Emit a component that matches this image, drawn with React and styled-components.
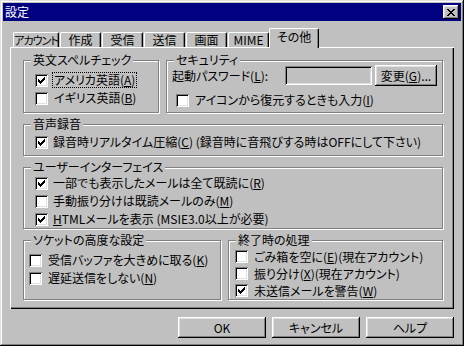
import React from 'react';
import styled, { createGlobalStyle } from 'styled-components';

const GlobalStyle = createGlobalStyle`
  html, body {
    margin: 0;
    padding: 0;
    background: #c0c0c0;
  }
  body {
    font-family: "Noto Sans CJK JP", "Noto Sans", sans-serif;
    font-size: 12px;
    font-feature-settings: "palt";
    color: #000;
  }
  * {
    box-sizing: border-box;
  }
`;

const Window = styled.div`
  width: 464px;
  height: 346px;
  padding: 3px;
  background: #c0c0c0;
  box-shadow: inset -1px -1px 0 #000, inset 1px 1px 0 #dfdfdf,
    inset -2px -2px 0 #808080, inset 2px 2px 0 #fff;
  display: flex;
  flex-direction: column;
`;

const TitleBar = styled.div`
  height: 18px;
  background: #000080;
  color: #fff;
  display: flex;
  align-items: center;
  justify-content: space-between;
  padding: 0 2px;
  line-height: 18px;
`;

const Raised = `
  background: #c0c0c0;
  box-shadow: inset -1px -1px 0 #000, inset 1px 1px 0 #fff,
    inset -2px -2px 0 #808080, inset 2px 2px 0 #dfdfdf;
`;

const CloseButton = styled.div`
  ${Raised}
  width: 16px;
  height: 14px;
  display: flex;
  align-items: center;
  justify-content: center;
`;

const TabStrip = styled.div`
  display: flex;
  align-items: flex-end;
  height: 19px;
  margin-top: 7px;
  padding-left: 10px;
  position: relative;
  z-index: 1;
`;

const Tab = styled.div`
  flex: none;
  width: ${(p) => p.$w}px;
  height: ${(p) => (p.$active ? 20 : 15)}px;
  margin-right: 1px;
  margin-left: ${(p) => (p.$active ? -1 : 0)}px;
  margin-bottom: ${(p) => (p.$active ? -1 : 0)}px;
  background: #c0c0c0;
  border-left: 1px solid #fff;
  border-top: 1px solid #fff;
  border-right: 1px solid #000;
  border-radius: 2px 2px 0 0;
  box-shadow: inset -1px 0 0 #808080;
  display: flex;
  justify-content: center;
  align-items: ${(p) => (p.$active ? 'flex-start' : 'center')};
  padding-top: ${(p) => (p.$active ? 1 : 0)}px;
  line-height: 14px;
  font-size: ${(p) => (p.$tight ? 11 : 12)}px;
  letter-spacing: ${(p) => (p.$tight ? -1 : 0)}px;
  white-space: nowrap;
`;

const Panel = styled.div`
  margin-left: 7px;
  width: 444px;
  height: 262px;
  padding: 13px 11px 0 13px;
  box-shadow: inset 1px 1px 0 #fff, inset -1px -1px 0 #000,
    inset -2px -2px 0 #808080;
  display: flex;
  flex-direction: column;
  gap: 11px;
`;

const GroupRow = styled.div`
  display: grid;
  grid-template-columns: ${(p) => p.$cols};
  gap: 7px;
`;

const Group = styled.div`
  position: relative;
  height: ${(p) => p.$h}px;
  border: 1px solid #808080;
  box-shadow: inset 1px 1px 0 #fff, 1px 1px 0 #fff;
  padding: ${(p) => p.$pad};
  display: flex;
  flex-direction: column;
`;

const Legend = styled.span`
  position: absolute;
  top: -8px;
  left: 7px;
  padding: 0 2px;
  background: #c0c0c0;
  line-height: 14px;
  white-space: nowrap;
`;

const Row = styled.div`
  display: flex;
  align-items: center;
  height: ${(p) => p.$h || 18}px;
  gap: ${(p) => p.$gap || 6}px;
  margin-top: ${(p) => p.$mt || 0}px;
  padding-left: ${(p) => p.$pl || 0}px;
  line-height: 14px;
  white-space: nowrap;
`;

const Box = styled.span`
  flex: none;
  width: 13px;
  height: 13px;
  background: #fff;
  box-shadow: inset 1px 1px 0 #808080, inset -1px -1px 0 #fff,
    inset 2px 2px 0 #000, inset -2px -2px 0 #dfdfdf;
  display: flex;
  align-items: center;
  justify-content: center;
`;

const Label = styled.span`
  padding: 0 1px;
  margin-left: -1px;
  outline: ${(p) => (p.$focus ? '1px dotted #000' : 'none')};
`;

const Field = styled.div`
  width: 87px;
  height: 19px;
  margin-left: auto;
  background: #c0c0c0;
  box-shadow: inset 1px 1px 0 #808080, inset -1px -1px 0 #fff,
    inset 2px 2px 0 #000, inset -2px -2px 0 #dfdfdf;
`;

const Button = styled.div`
  ${Raised}
  width: ${(p) => p.$w}px;
  height: 21px;
  display: flex;
  align-items: center;
  justify-content: center;
  line-height: 14px;
  white-space: nowrap;
`;

const Footer = styled.div`
  display: flex;
  justify-content: flex-end;
  gap: 6px;
  margin-top: 8px;
  padding-right: 7px;
`;

const CHECK = [[6, 0, 1], [5, 1, 2], [0, 2, 1], [4, 2, 3], [0, 3, 2], [3, 3, 3], [0, 4, 5], [1, 5, 3], [2, 6, 1]];
const CROSS = [[0, 0, 2], [6, 0, 2], [1, 1, 2], [5, 1, 2], [2, 2, 4], [3, 3, 2], [2, 4, 4], [1, 5, 2], [5, 5, 2], [0, 6, 2], [6, 6, 2]];

const Pixels = ({ rows, w, h }) => (
  <svg width={w} height={h} viewBox={`0 0 ${w} ${h}`} shapeRendering="crispEdges">
    {rows.map(([x, y, len], i) => (
      <rect key={i} x={x} y={y} width={len} height={1} fill="#000" />
    ))}
  </svg>
);

const Check = ({ checked, children, focus, ...rest }) => (
  <Row {...rest}>
    <Box>{checked && <Pixels rows={CHECK} w={7} h={7} />}</Box>
    <Label $focus={focus}>{children}</Label>
  </Row>
);

const tabs = [
  ['アカウント', 46, true],
  ['作成', 41],
  ['受信', 41],
  ['送信', 41],
  ['画面', 41],
  ['MIME', 41],
];

export default function App() {
  return (
    <>
      <GlobalStyle />
      <Window>
        <TitleBar>
          <span>設定</span>
          <CloseButton>
            <Pixels rows={CROSS} w={8} h={7} />
          </CloseButton>
        </TitleBar>

        <TabStrip>
          {tabs.map(([t, w, tight]) => (
            <Tab key={t} $w={w} $tight={tight}>{t}</Tab>
          ))}
          <Tab $w={50} $active>その他</Tab>
        </TabStrip>

        <Panel>
          <GroupRow $cols="136px 277px">
            <Group $h={53} $pad="10px 0 0 11px">
              <Legend>英文スペルチェック</Legend>
              <Check checked focus>アメリカ英語(<u>A</u>)</Check>
              <Check>イギリス英語(<u>B</u>)</Check>
            </Group>
            <Group $h={53} $pad="4px 5px 0 5px">
              <Legend>セキュリティ</Legend>
              <Row $h={21} $gap={3}>
                <span>起動パスワード(<u>L</u>):</span>
                <Field />
                <Button $w={62}>変更(<u>G</u>)...</Button>
              </Row>
              <Check $mt={5} $pl={4}>アイコンから復元するときも入力(<u>I</u>)</Check>
            </Group>
          </GroupRow>

          <Group $h={32} $pad="8px 0 0 11px">
            <Legend>音声録音</Legend>
            <Check checked $gap={5}>
              録音時リアルタイム圧縮(<u>C</u>) (録音時に音飛びする時はOFFにして下さい)
            </Check>
          </Group>

          <Group $h={62} $pad="6px 0 0 11px">
            <Legend>ユーザーインターフェイス</Legend>
            <Check checked $gap={5}>一部でも表示したメールは全て既読に(<u>R</u>)</Check>
            <Check $gap={5}>手動振り分けは既読メールのみ(<u>M</u>)</Check>
            <Check checked $gap={5}><u>H</u>TMLメールを表示 (MSIE3.0以上が必要)</Check>
          </Group>

          <GroupRow $cols="198px 215px">
            <Group $h={60} $pad="10px 0 0 5px">
              <Legend>ソケットの高度な設定</Legend>
              <Check>受信バッファを大きめに取る(<u>K</u>)</Check>
              <Check>遅延送信をしない(<u>N</u>)</Check>
            </Group>
            <Group $h={60} $pad="7px 0 0 6px">
              <Legend>終了時の処理</Legend>
              <Check $h={17}>ごみ箱を空に(<u>E</u>)(現在アカウント)</Check>
              <Check $h={17}>振り分け(<u>X</u>)(現在アカウント)</Check>
              <Check $h={17} checked>未送信メールを警告(<u>W</u>)</Check>
            </Group>
          </GroupRow>
        </Panel>

        <Footer>
          <Button $w={88}>OK</Button>
          <Button $w={88}>キャンセル</Button>
          <Button $w={88}>ヘルプ</Button>
        </Footer>
      </Window>
    </>
  );
}
